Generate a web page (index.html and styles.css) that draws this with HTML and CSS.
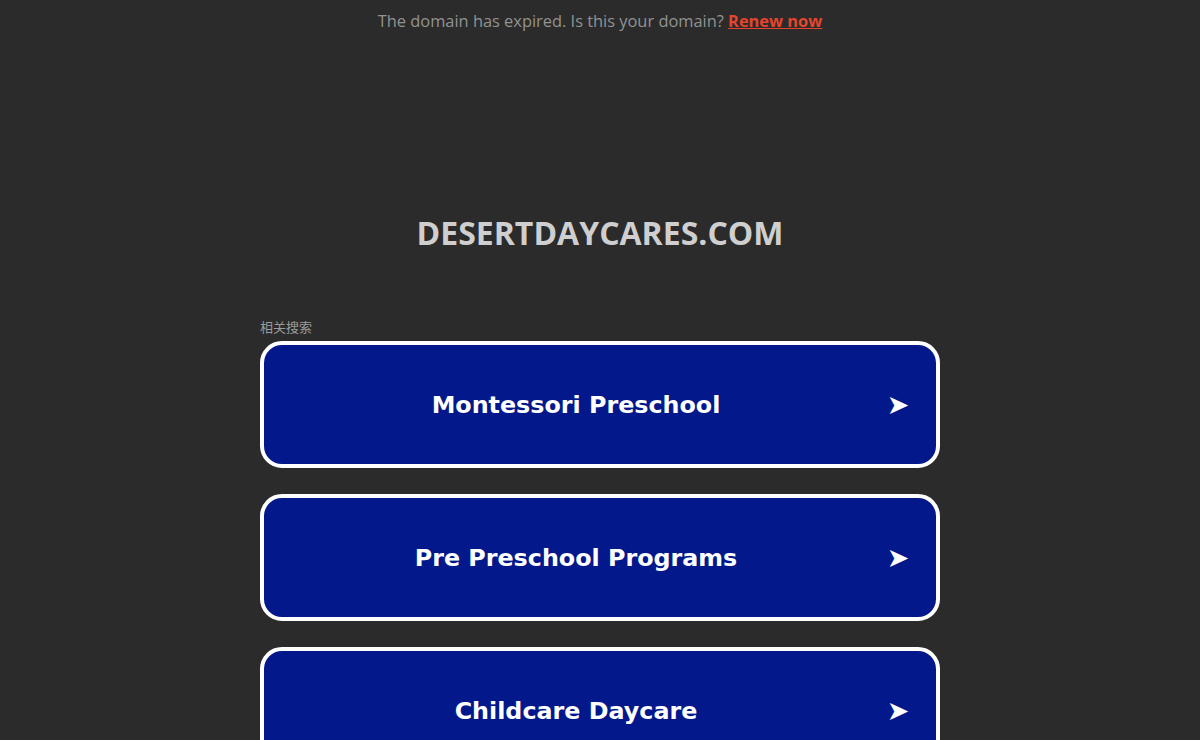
FILE: index.html
```html
<!DOCTYPE html>
<html>
<head>
<meta charset="utf-8">
<link rel="stylesheet" href="styles.css">
</head>
<body>
<div class="notice">The domain has expired. Is this your domain? <a class="renew" href="#">Renew now</a></div>
<h1 class="domain">DESERTDAYCARES.COM</h1>
<div class="results">
  <div class="label">相关搜索</div>
  <a class="item" href="#"><span class="item-text">Montessori Preschool</span><span class="arrow">➤</span></a>
  <a class="item" href="#"><span class="item-text">Pre Preschool Programs</span><span class="arrow">➤</span></a>
  <a class="item" href="#"><span class="item-text">Childcare Daycare</span><span class="arrow">➤</span></a>
</div>
</body>
</html>
```
FILE: styles.css
```css
html, body {
  margin: 0;
  padding: 0;
  background: #2b2b2b;
  height: 100%;
  overflow: hidden;
}
body {
  font-family: "Open Sans", "Noto Sans", sans-serif;
}
.notice {
  text-align: center;
  color: #929292;
  font-size: 16.4px;
  padding-top: 9px;
  line-height: 24px;
}
.renew {
  color: #e4452c;
  font-weight: bold;
  text-decoration: underline;
}
.domain {
  margin: 0;
  padding-top: 180px;
  text-align: center;
  color: #cfcfcf;
  font-size: 32px;
  line-height: 40px;
  font-weight: 700;
}
.results {
  width: 680px;
  margin: 66px auto 0;
  display: flex;
  flex-direction: column;
  gap: 26px;
}
.label {
  font-family: "Noto Sans CJK SC", sans-serif;
  font-size: 13px;
  color: #9a9a9a;
  line-height: 16px;
  margin-bottom: -20px;
}
.item {
  display: flex;
  align-items: center;
  height: 119px;
  border: 4px solid #ffffff;
  border-radius: 22px;
  background: #03188a;
  color: #ffffff;
  text-decoration: none;
  padding-right: 28px;
}
.item-text {
  flex: 1;
  text-align: center;
  font-family: "DejaVu Sans", Verdana, sans-serif;
  font-weight: bold;
  font-size: 23.8px;
}
.arrow {
  width: 20px;
  display: flex;
  justify-content: center;
  font-family: "DejaVu Sans", sans-serif;
  font-size: 27px;
  line-height: 1;
}
```
